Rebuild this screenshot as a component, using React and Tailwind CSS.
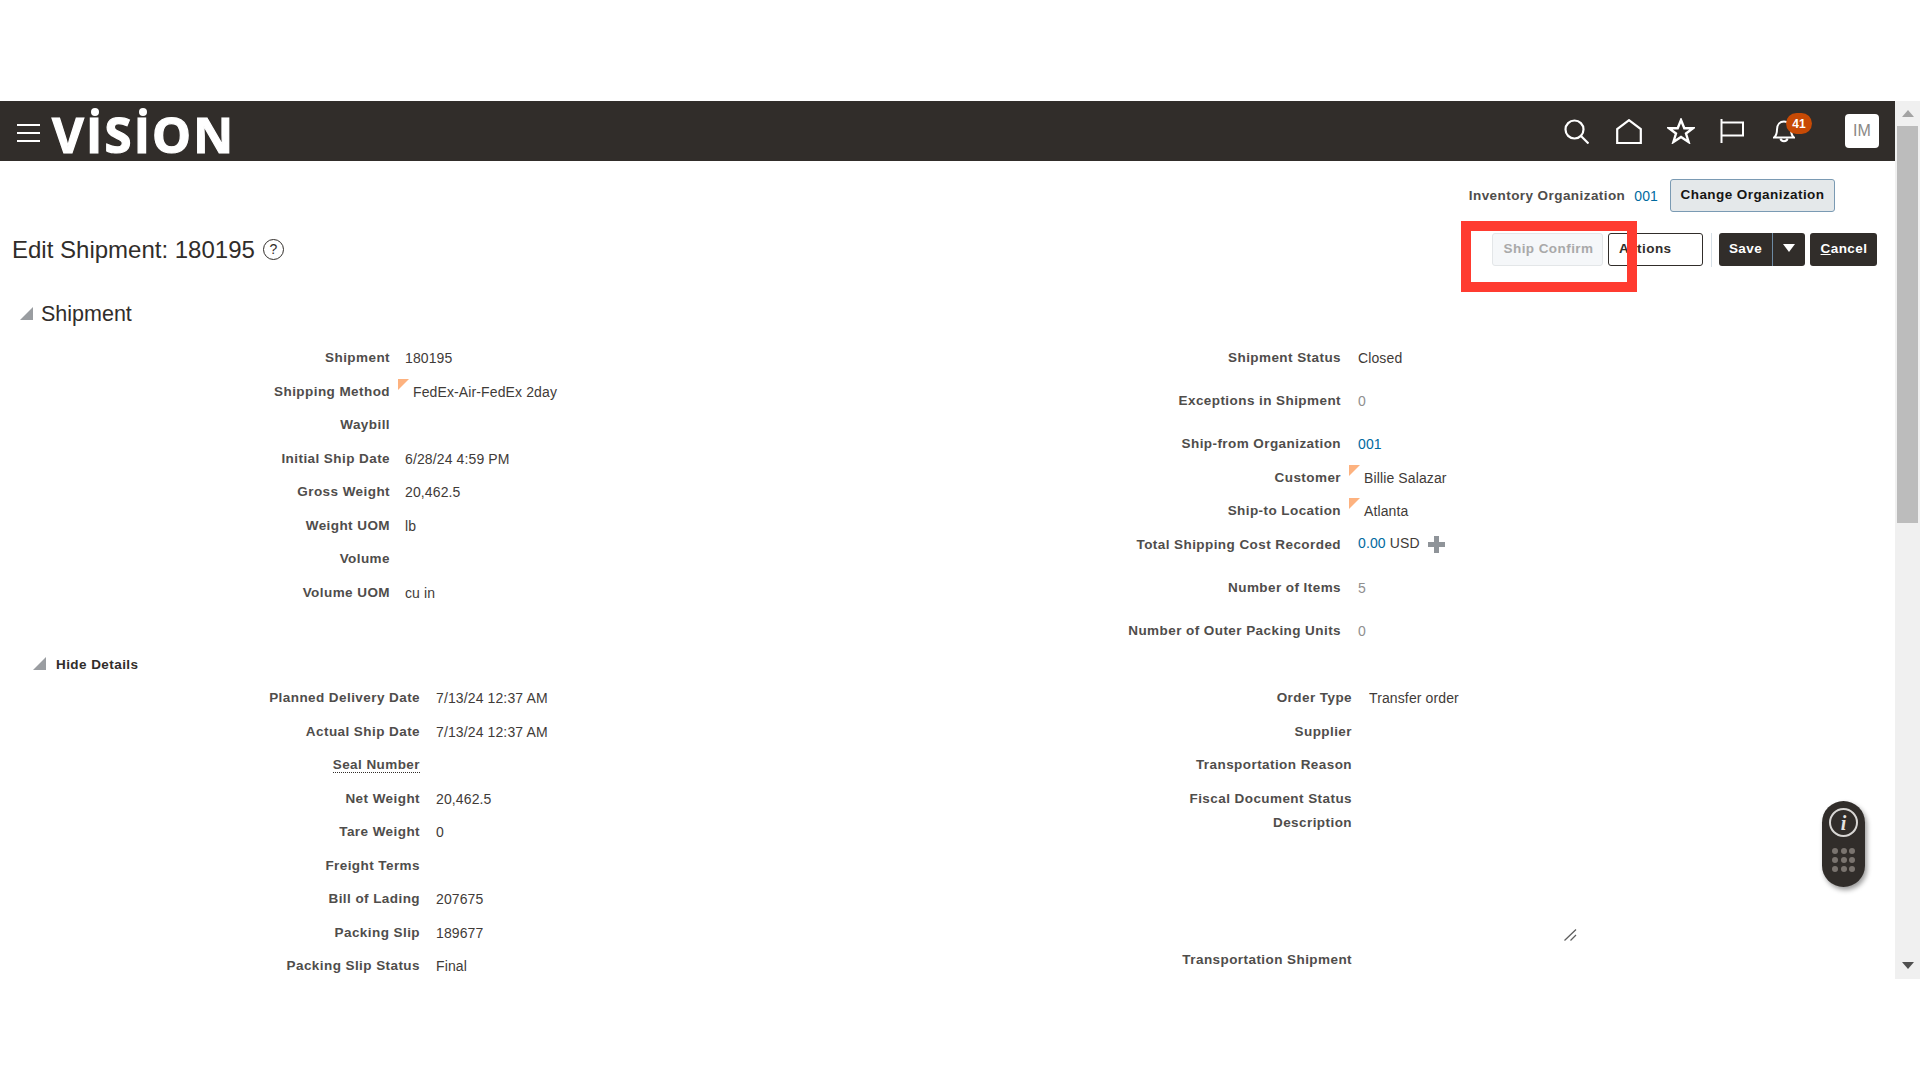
const SANS = "font-['Liberation_Sans',Arial,sans-serif]";

const SHIPMENT_LEFT = [
  { label: "Shipment", value: "180195" },
  { label: "Shipping Method", value: "FedEx-Air-FedEx 2day", flag: true },
  { label: "Waybill" },
  { label: "Initial Ship Date", value: "6/28/24 4:59 PM" },
  { label: "Gross Weight", value: "20,462.5" },
  { label: "Weight UOM", value: "lb" },
  { label: "Volume" },
  { label: "Volume UOM", value: "cu in" },
];

const DETAILS_LEFT = [
  { label: "Planned Delivery Date", value: "7/13/24 12:37 AM" },
  { label: "Actual Ship Date", value: "7/13/24 12:37 AM" },
  { label: "Seal Number", dotted: true },
  { label: "Net Weight", value: "20,462.5" },
  { label: "Tare Weight", value: "0" },
  { label: "Freight Terms" },
  { label: "Bill of Lading", value: "207675" },
  { label: "Packing Slip", value: "189677" },
  { label: "Packing Slip Status", value: "Final" },
];

function Flag() {
  return (
    <svg width="11" height="11" viewBox="0 0 11 11" className="-mt-[3px] ml-[-6px] mr-[4px] shrink-0">
      <path d="M0 0H11L0 11Z" fill="#fdb27f" />
    </svg>
  );
}

function Label({ width, dotted, children }) {
  return (
    <div className={`${width} shrink-0 text-right text-[13.5px] font-bold leading-5 tracking-[0.43px] text-[#4f4d4b]`}>
      <span className={dotted ? "border-b border-dotted border-[#312d2a]" : ""}>{children}</span>
    </div>
  );
}

function Field({ label, value, flag, dotted, width, gap, rowClass = "h-[33.5px]", valueClass = "text-[#3f3b38]" }) {
  return (
    <div className={`flex items-start ${rowClass}`}>
      <Label width={width} dotted={dotted}>{label}</Label>
      <div className={`flex items-start ${gap} text-[14px] leading-5 tracking-[0.12px] ${valueClass}`}>
        {flag && <Flag />}
        {value}
      </div>
    </div>
  );
}

function Triangle({ size }) {
  return (
    <svg width={size} height={size} viewBox="0 0 13 13" className="-mt-[3px] shrink-0">
      <path d="M13 0V13H0Z" fill="#9a9da1" />
    </svg>
  );
}

function TopIcons() {
  return (
    <div className="flex items-center">
      <svg width="25" height="25" viewBox="0 0 25 25" fill="none" stroke="white" strokeWidth="2.2">
        <circle cx="10.5" cy="10.5" r="9" />
        <path d="M17 17L24.5 24.5" />
      </svg>
      <svg width="26" height="25" viewBox="0 0 26 25" fill="none" stroke="white" strokeWidth="2.2" className="ml-[27px]">
        <path d="M1.2 24V10L13 1.2L24.8 10V24Z" />
      </svg>
      <svg width="28" height="26" viewBox="0 0 28 26" fill="none" stroke="white" strokeWidth="2.4" strokeLinejoin="miter" className="ml-[25px]">
        <path d="M14 2L17.3 10.2H26L19 15.5L21.6 24L14 18.9L6.4 24L9 15.5L2 10.2H10.7Z" />
      </svg>
      <svg width="24" height="24" viewBox="0 0 24 24" fill="none" stroke="white" strokeWidth="2" className="ml-[25px]">
        <path d="M1.5 0V24M1.5 3.5H23V16.5H1.5" />
      </svg>
      <div className="relative ml-[29px] h-6 w-[22px]">
        <svg width="22" height="24" viewBox="0 0 22 24" fill="none" stroke="white" strokeWidth="2">
          <path d="M1 18.5C3.5 16.5 4 14 4 10.5C4 5.5 7 2.5 11 2.5C15 2.5 18 5.5 18 10.5C18 14 18.5 16.5 21 18.5Z" />
          <path d="M7.5 19.5C8 23 14 23 14.5 19.5" />
        </svg>
        <span className={`absolute -top-[6px] left-[13px] flex h-[21px] w-[26px] items-center justify-center rounded-full bg-[#c74a05] text-[12px] font-bold text-white ${SANS}`}>
          41
        </span>
      </div>
      <div className="ml-[50px] flex h-[34px] w-[34px] items-center justify-center rounded-[4px] bg-white text-[16px] text-[#8b8986]">
        IM
      </div>
    </div>
  );
}

function Logo() {
  return (
    <div className="flex h-[60px] items-center pt-[6px] font-['Open_Sans',sans-serif] text-[49px] font-bold leading-none tracking-[2.2px] text-white [-webkit-text-stroke:1.2px_white]">
      V<DottedI />S<DottedI />ON
    </div>
  );
}

function DottedI() {
  return (
    <span className="relative">
      I
      <span className="absolute left-1/2 top-[-2px] h-[8px] w-[8px] -translate-x-1/2 rounded-full bg-white" />
    </span>
  );
}

export default function App() {
  return (
    <div className={`relative flex h-[1080px] w-[1920px] overflow-hidden bg-white pt-[101px] pb-[101px] ${SANS}`}>
      <div className="flex w-[1895px] flex-col">
        {/* Header */}
        <header className="flex h-[60px] shrink-0 items-center justify-between bg-[#312d2a] pl-[17px] pr-4">
          <div className="flex items-center gap-[12px]">
            <div className="flex w-[23px] flex-col gap-[5.5px] pt-[4px]">
              <div className="h-[2.5px] bg-white" />
              <div className="h-[2.5px] bg-white" />
              <div className="h-[2.5px] bg-white" />
            </div>
            <Logo />
          </div>
          <TopIcons />
        </header>

        <main className="min-h-0 flex-1 overflow-hidden">
          {/* Organization */}
          <div className="flex items-center justify-end pr-[60px] pt-[18px]">
            <span className="pt-[2px] text-[13.5px] font-bold tracking-[0.43px] text-[#4f4d4b]">Inventory Organization</span>
            <span className="ml-[9px] pt-[2px] text-[14px] tracking-[0.12px] text-[#006b9f]">001</span>
            <button className="ml-[12px] h-[33px] w-[165px] rounded-[3px] border border-[#7a9ab3] bg-[#e4e8ea] text-[13.5px] font-bold tracking-[0.43px] text-[#161513]">
              Change Organization
            </button>
          </div>

          {/* Title and toolbar */}
          <div className="mt-[21px] flex h-[33px] items-center justify-between pl-[12px] pr-[18px]">
            <div className="flex items-center gap-[8px]">
              <h1 className="text-[24px] font-normal leading-none text-[#312d2a]">Edit Shipment: 180195</h1>
              <span className="flex h-[21px] w-[21px] items-center justify-center rounded-full border-[1.5px] border-[#312d2a] text-[14px] text-[#312d2a]">?</span>
            </div>
            <div className="flex items-center text-[13.5px] font-bold tracking-[0.43px]">
              <button className="h-[33px] w-[111px] rounded-[3px] border border-[#e3e6e8] bg-[#f5f7f9] pl-[2px] text-[#a9a9a9]">Ship Confirm</button>
              <button className="ml-[5px] h-[33px] w-[95px] rounded-[3px] border border-[#312d2a] pl-[10px] text-left text-[#312d2a]">Actions</button>
              <div className="ml-[8px] h-[34px] w-px bg-[#d6dfe6]" />
              <div className="ml-[7px] flex h-[33px] w-[86px] items-center rounded-[3px] bg-[#312d2a] text-white">
                <span className="flex h-full w-[54px] items-center justify-center border-r border-[#6d8aa3]">Save</span>
                <svg width="12" height="8" viewBox="0 0 12 8" className="ml-[10px] -mt-[3px]">
                  <path d="M0 0H12L6 8Z" fill="white" />
                </svg>
              </div>
              <button className="ml-[5px] h-[33px] w-[67px] rounded-[3px] bg-[#312d2a] pl-[1px] text-white">
                <span className="underline">C</span>ancel
              </button>
            </div>
          </div>

          {/* Shipment */}
          <div className="mt-[34px] flex h-[30px] items-center gap-[8px] pl-[20px]">
            <Triangle size={13} />
            <h2 className="text-[21.5px] font-normal leading-none text-[#312d2a]">Shipment</h2>
          </div>

          <div className="mt-[18px] flex h-[307px]">
            <div className="w-[1000px] shrink-0">
              {SHIPMENT_LEFT.map((f) => (
                <Field key={f.label} {...f} width="w-[390px]" gap={f.flag ? "ml-[14px]" : "ml-[15px]"} />
              ))}
            </div>
            <div className="flex-1">
              <Field label="Shipment Status" value="Closed" width="w-[341px]" gap="ml-[17px]" rowClass="h-[43px]" />
              <Field label="Exceptions in Shipment" value="0" width="w-[341px]" gap="ml-[17px]" rowClass="h-[43px]" valueClass="text-[#8f8f8f]" />
              <Field label="Ship-from Organization" value="001" width="w-[341px]" gap="ml-[17px]" rowClass="h-[34px]" valueClass="text-[#006b9f]" />
              <Field label="Customer" value="Billie Salazar" flag width="w-[341px]" gap="ml-[14px]" rowClass="h-[33px]" />
              <Field label="Ship-to Location" value="Atlanta" flag width="w-[341px]" gap="ml-[14px]" rowClass="h-[34px]" />
              <div className="flex h-[43px] items-start">
                <Label width="w-[341px]">Total Shipping Cost Recorded</Label>
                <div className="-mt-[2px] ml-[17px] flex items-center text-[14px] leading-5 tracking-[0.12px] text-[#3f3b38]">
                  <span className="text-[#006b9f]">0.00</span>
                  <span className="ml-[4px]">USD</span>
                  <svg width="17" height="17" viewBox="0 0 17 17" className="ml-[8px] mt-[2px]">
                    <path d="M6 0H11V6H17V11H11V17H6V11H0V6H6Z" fill="#8f9499" />
                  </svg>
                </div>
              </div>
              <Field label="Number of Items" value="5" width="w-[341px]" gap="ml-[17px]" rowClass="h-[43px]" valueClass="text-[#8f8f8f]" />
              <Field label="Number of Outer Packing Units" value="0" width="w-[341px]" gap="ml-[17px]" rowClass="h-[24px]" valueClass="text-[#8f8f8f]" />
            </div>
          </div>

          {/* Details */}
          <div className="flex h-5 items-center gap-[10px] pl-[33px]">
            <Triangle size={13} />
            <span className="text-[13.5px] font-bold tracking-[0.43px] text-[#312d2a]">Hide Details</span>
          </div>

          <div className="mt-[13px] flex">
            <div className="w-[1000px] shrink-0">
              {DETAILS_LEFT.map((f) => (
                <Field key={f.label} {...f} width="w-[420px]" gap="ml-[16px]" />
              ))}
            </div>
            <div className="flex-1">
              <Field label="Order Type" value="Transfer order" width="w-[352px]" gap="ml-[17px]" />
              <Field label="Supplier" width="w-[352px]" gap="ml-[17px]" />
              <Field label="Transportation Reason" width="w-[352px]" gap="ml-[17px]" />
              <div className="flex h-[161px] items-start">
                <div className="w-[352px] shrink-0 text-right text-[13.5px] font-bold leading-6 tracking-[0.43px] text-[#4f4d4b]">
                  <div className="-mt-[2px]">Fiscal Document Status</div>
                  <div>Description</div>
                </div>
                <div className="ml-[17px] flex h-[152px] w-[208px] items-end justify-end">
                  <svg width="13" height="12" viewBox="0 0 13 12" fill="none" stroke="#5f5f5f" strokeWidth="1.3">
                    <path d="M0.5 11.5L12 0.5M6.5 11.5L12 6" />
                  </svg>
                </div>
              </div>
              <Field label="Transportation Shipment" width="w-[352px]" gap="ml-[17px]" />
            </div>
          </div>
        </main>
      </div>

      {/* Scrollbar */}
      <div className="flex w-[25px] flex-col items-center bg-[#f0f0f0]">
        <div className="flex h-[25px] w-full items-center justify-center">
          <svg width="12" height="7" viewBox="0 0 12 7"><path d="M6 0L12 7H0Z" fill="#a3a3a3" /></svg>
        </div>
        <div className="h-[397px] w-[21px] bg-[#bcbcbc]" />
        <div className="flex-1" />
        <div className="flex h-[28px] w-full items-center justify-center">
          <svg width="12" height="7" viewBox="0 0 12 7"><path d="M0 0H12L6 7Z" fill="#505050" /></svg>
        </div>
      </div>

      {/* Annotation over the toolbar */}
      <div className="pointer-events-none absolute left-[1461px] top-[221px] h-[71px] w-[176px] border-[10px] border-[#ff3b30]" />

      {/* Floating help pill */}
      <div className="absolute left-[1822px] top-[801px] flex h-[86px] w-[43px] flex-col items-center rounded-full bg-[#312d2a] pt-[7px] shadow-[2px_3px_5px_rgba(0,0,0,0.4)]">
        <div className="flex h-[29px] w-[29px] items-center justify-center rounded-full border-2 border-[#d8d6d4] font-['Liberation_Serif',serif] text-[20px] font-bold italic leading-none text-[#e4e2e0]">
          i
        </div>
        <div className="mt-[11px] grid grid-cols-3 gap-x-[2.5px] gap-y-[3px]">
          {Array.from({ length: 9 }).map((_, i) => (
            <div key={i} className="h-[6px] w-[6px] rounded-full bg-[#7a746f]" />
          ))}
        </div>
      </div>
    </div>
  );
}
